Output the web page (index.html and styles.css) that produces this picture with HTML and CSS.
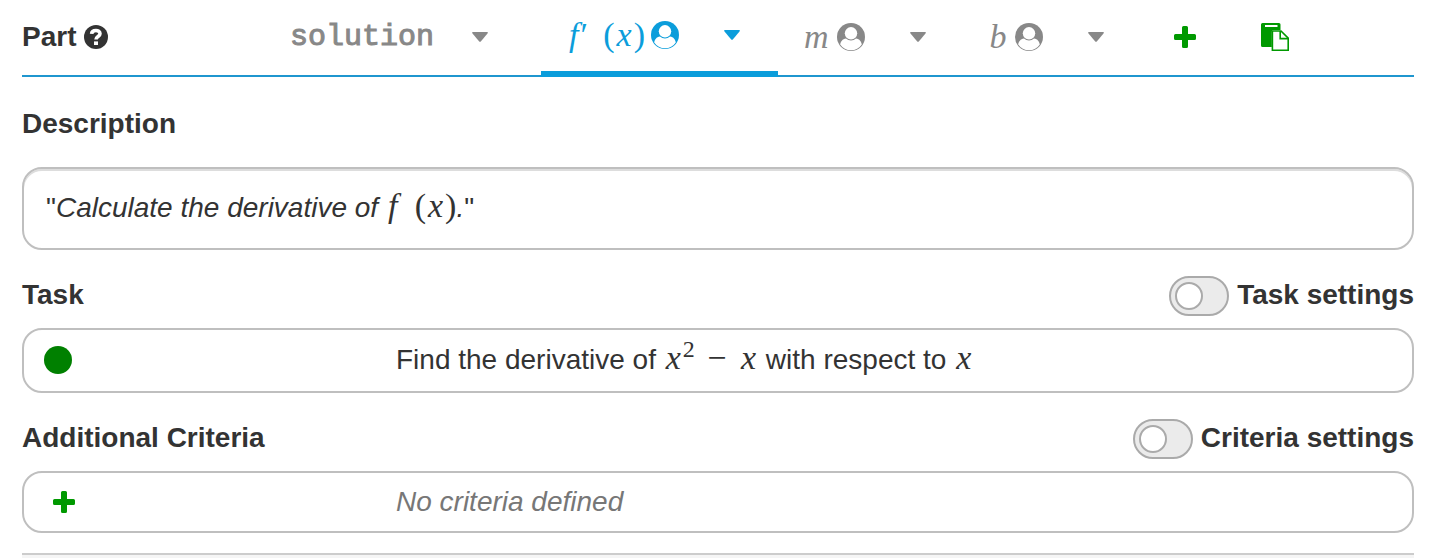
FILE: index.html
```
<!DOCTYPE html>
<html lang="en">

<head>
    <meta charset="UTF-8">
    <title>Part editor</title>
    <link rel="stylesheet" href="styles.css">
</head>

<body>

    <svg class="sprite" width="0" height="0" aria-hidden="true">
        <symbol id="caret" viewBox="0 0 16 10">
            <path d="M1 0H15Q16.6 .3 15.5 1.6L9 9.2Q8 10.2 7 9.2L.5 1.6Q-.6 .3 1 0Z" fill="currentColor" />
        </symbol>
        <symbol id="plus" viewBox="0 0 22 22">
            <path d="M9.5 0H12.5Q14 0 14 1.5V8H20.5Q22 8 22 9.5V12.5Q22 14 20.5 14H14V20.5Q14 22 12.5 22H9.5Q8 22 8 20.5V14H1.5Q0 14 0 12.5V9.5Q0 8 1.5 8H8V1.5Q8 0 9.5 0Z" fill="currentColor" />
        </symbol>
        <symbol id="user" viewBox="0 0 28 28">
            <circle cx="14" cy="14" r="14" fill="currentColor" />
            <path d="M9 15.5C5.4 15.8 3.6 19 3.2 21.4A13 13 0 0 0 24.8 21.4C24.4 19 22.6 15.8 19 15.5A7.2 7.2 0 0 1 9 15.5Z" fill="#fff" />
            <circle cx="14" cy="10.3" r="6.2" fill="#fff" />
        </symbol>
        <symbol id="paste" viewBox="0 0 28 28">
            <path d="M1.5 0H18Q19.5 0 19.5 1.5V7H12.5Q10.8 7 10.8 8.7V24H1.5Q0 24 0 22.5V1.5Q0 0 1.5 0Z" fill="currentColor" />
            <rect x="4" y="2" width="12.5" height="2" fill="#fff" />
            <path d="M12 8H20L27.2 15.2V27.2H11.4V8.6Q11.4 8 12 8Z" fill="#fff" stroke="currentColor" stroke-width="1.6" />
            <path d="M19.2 8V15.6H27" fill="none" stroke="currentColor" stroke-width="1.6" />
        </symbol>
    </svg>

    <main class="part">
        <nav class="part-nav">
            <h2 class="part-title">Part
                <svg width="24" height="24" viewBox="0 0 24 24" role="img" aria-label="Help">
                    <circle cx="12" cy="12" r="12" fill="currentColor" />
                    <path d="M7.6 8.8C8 4.4 16 4.4 16 8.7C16 11.6 12 11.5 12 14.6" fill="none" stroke="#fff" stroke-width="3.6" />
                    <rect x="10" y="16.4" width="4" height="3.6" fill="#fff" />
                </svg>
            </h2>
            <ul class="tabs">
                <li class="tab tab-solution">
                    <button class="tab-label mono">solution</button>
                    <button class="tab-menu" aria-label="solution menu"><svg width="16" height="10"><use href="#caret" /></svg></button>
                </li>
                <li class="tab active">
                    <button class="tab-label"><span class="math"><i>f</i>′&nbsp;&thinsp;(<i>x</i>)</span><svg width="28" height="28"><use href="#user" /></svg></button>
                    <button class="tab-menu" aria-label="f prime menu"><svg width="16" height="10"><use href="#caret" /></svg></button>
                </li>
                <li class="tab">
                    <button class="tab-label"><span class="math"><i>m</i></span><svg width="28" height="28"><use href="#user" /></svg></button>
                    <button class="tab-menu" aria-label="m menu"><svg width="16" height="10"><use href="#caret" /></svg></button>
                </li>
                <li class="tab">
                    <button class="tab-label"><span class="math"><i>b</i></span><svg width="28" height="28"><use href="#user" /></svg></button>
                    <button class="tab-menu" aria-label="b menu"><svg width="16" height="10"><use href="#caret" /></svg></button>
                </li>
            </ul>
            <div class="actions">
                <button class="action" aria-label="Add part"><svg width="22" height="22"><use href="#plus" /></svg></button>
                <button class="action" aria-label="Paste part"><svg width="28" height="28"><use href="#paste" /></svg></button>
            </div>
        </nav>

        <section>
            <div class="section-head">
                <h3 id="description">Description</h3>
            </div>
            <div class="box description" role="textbox" aria-labelledby="description" tabindex="0">
                <p>"<em>Calculate the derivative of </em><span class="math"><i>f</i>&nbsp;&thinsp;(<i>x</i>)</span><em>.</em>"</p>
            </div>
        </section>

        <section>
            <div class="section-head">
                <h3>Task</h3>
                <label class="setting"><input class="toggle" type="checkbox"> Task settings</label>
            </div>
            <div class="box row task">
                <span class="status"></span>
                <p>Find the derivative of <span class="math"><i>x</i><sup>2</sup> <span class="op">−</span> <i>x</i></span> with respect to <span class="math"><i>x</i></span></p>
            </div>
        </section>

        <section>
            <div class="section-head">
                <h3>Additional Criteria</h3>
                <label class="setting"><input class="toggle" type="checkbox"> Criteria settings</label>
            </div>
            <div class="box row criteria">
                <button class="action" aria-label="Add criterion"><svg width="22" height="22"><use href="#plus" /></svg></button>
                <p class="empty">No criteria defined</p>
            </div>
        </section>

        <footer class="part-footer"></footer>
    </main>

</body>

</html>
```
FILE: styles.css
```
*, *::before {
    box-sizing: border-box;
}

body {
    margin: 0;
    background: #fff;
    color: #333;
    font: 28px/38px "Liberation Sans", Arial, sans-serif;
}

h2, h3, p, ul {
    margin: 0;
    padding: 0;
}

h2, h3 {
    font-size: 28px;
}

button {
    border: 0;
    padding: 0;
    background: none;
    color: inherit;
    font: inherit;
    cursor: pointer;
}

svg {
    display: block;
    flex: none;
}

.sprite {
    position: absolute;
}

.part {
    padding: 0 30px 0 22px;
}

.math {
    font-family: "Liberation Serif", "Times New Roman", serif;
    font-size: 34px;
    line-height: 36px;
}

.math i {
    margin: 0 2px;
}

.math sup {
    font-size: 24px;
    line-height: 0;
}

.op {
    margin: 0 4px;
}

/* tab bar */
.part-nav {
    display: flex;
    height: 77px;
    border-bottom: 2px solid #1f96cf;
}

.part-title {
    display: flex;
    align-items: center;
    gap: 8px;
    width: 240px;
    height: 73px;
}

.tabs {
    display: flex;
    list-style: none;
}

.tab {
    display: flex;
    align-items: center;
    height: 77px;
    padding: 0 38px 4px 24px;
    color: #888;
}

.tab-solution {
    margin-right: 15px;
    padding-left: 28px;
}

.tab.active {
    padding-left: 26px;
    padding-bottom: 2px;
    border-bottom: 6px solid #0b9ddb;
    color: #0b9ddb;
}

.tab-label {
    display: flex;
    align-items: center;
    gap: 6px;
    margin-right: 45px;
}

.tab-label.mono {
    margin-right: 38px;
    font-family: "Liberation Mono", "Courier New", monospace;
    font-size: 30px;
    -webkit-text-stroke: 1px;
}

.actions {
    display: flex;
    align-items: center;
    gap: 65px;
    height: 73px;
    padding-left: 32px;
}

.action {
    color: #090;
}

/* sections */
.section-head {
    display: flex;
    justify-content: space-between;
    height: 78px;
    padding-top: 26px;
}

.part-nav + section .section-head {
    height: 90px;
    padding-top: 28px;
}

.setting {
    display: flex;
    gap: 8px;
    height: 40px;
    font-weight: bold;
}

.toggle {
    appearance: none;
    width: 60px;
    height: 40px;
    margin: 0;
    padding: 4px;
    border: 2px solid #aaa;
    border-radius: 20px;
    background: #ebebeb;
}

.toggle::before {
    content: "";
    display: block;
    width: 28px;
    height: 28px;
    border: 2px solid #aaa;
    border-radius: 50%;
    background: #fff;
}

.toggle:checked::before {
    margin-left: auto;
}

.box {
    display: flex;
    align-items: center;
    padding: 0 20px;
    border: 2px solid #bfbfbf;
    border-radius: 20px;
}

.description {
    height: 83px;
    padding: 0 22px 2px;
    box-shadow: inset 0 2px #ddd;
}

.row {
    display: grid;
    grid-template-columns: 352px 1fr;
}

.task {
    height: 65px;
    padding-bottom: 2px;
}

.criteria {
    height: 62px;
}

.status {
    width: 28px;
    height: 28px;
    border-radius: 50%;
    background: #008000;
}

.row .action {
    justify-self: start;
    padding-left: 9px;
}

.empty {
    color: #777;
    font-style: italic;
}

.part-footer {
    height: 5px;
    margin-top: 20px;
    border-top: 2px solid #ccc;
    background: #f5f5f5;
}
```
